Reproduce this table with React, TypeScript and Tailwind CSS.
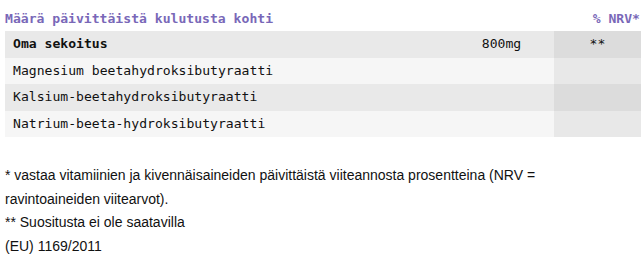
const rows = [
  { name: "Oma sekoitus", amount: "800mg", nrv: "**", bold: true },
  { name: "Magnesium beetahydroksibutyraatti", amount: "", nrv: "", bold: false },
  { name: "Kalsium-beetahydroksibutyraatti", amount: "", nrv: "", bold: false },
  { name: "Natrium-beeta-hydroksibutyraatti", amount: "", nrv: "", bold: false },
];

export default function App() {
  return (
    <div className="w-[644px] h-[263px] bg-white pl-[5px] pr-[3px] pt-[6px] overflow-hidden">
      <div className="flex justify-between items-center h-[25px] text-[13.1px] font-bold text-[#7968b8] font-['DejaVu_Sans_Mono','Liberation_Mono',monospace]">
        <span>Määrä päivittäistä kulutusta kohti</span>
        <span className="pr-[1px]">% NRV*</span>
      </div>
      <div className="flex flex-col text-[13.1px] text-[#111] font-['DejaVu_Sans_Mono','Liberation_Mono',monospace]">
        {rows.map((r, i) => (
          <div
            key={i}
            className={i % 2 === 0 ? "flex h-[26.5px] items-center bg-[#e9e9e9]" : "flex h-[26.5px] items-center bg-[#f6f6f6]"}
          >
            <div className={r.bold ? "flex-1 pl-[8px] font-bold" : "flex-1 pl-[8px]"}>{r.name}</div>
            <div className="w-[105px] text-center">{r.amount}</div>
            <div
              className={
                i % 2 === 0
                  ? "w-[87px] h-full flex items-center justify-center bg-[#dcdcdc]"
                  : "w-[87px] h-full flex items-center justify-center bg-[#e8e8e8]"
              }
            >
              {r.nrv}
            </div>
          </div>
        ))}
      </div>
      <div className="mt-[27px] w-[565px] text-[14px] leading-[23.5px] text-[#111] font-['Liberation_Sans',Arial,sans-serif]">
        <p>* vastaa vitamiinien ja kivennäisaineiden päivittäistä viiteannosta prosentteina (NRV = ravintoaineiden viitearvot).</p>
        <p>** Suositusta ei ole saatavilla</p>
        <p>(EU) 1169/2011</p>
      </div>
    </div>
  );
}
